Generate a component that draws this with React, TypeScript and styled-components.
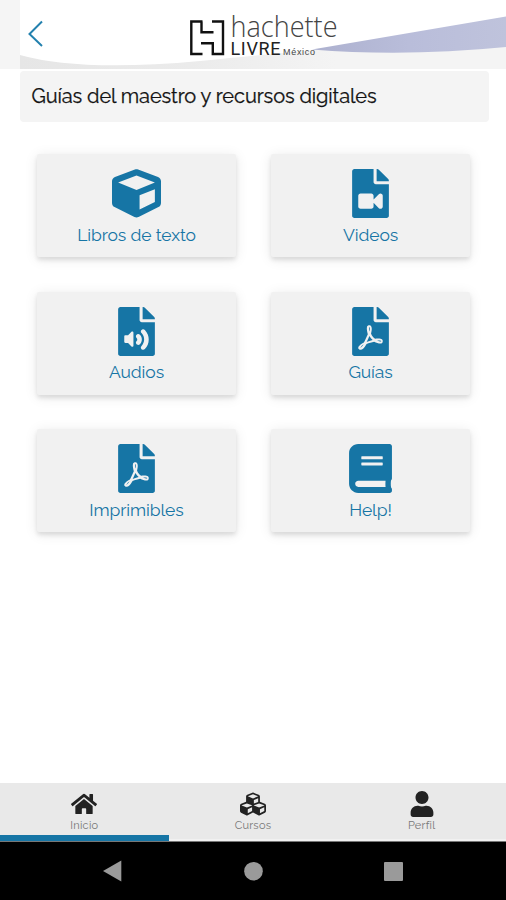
import React from "react";
import styled, { createGlobalStyle } from "styled-components";
import type { IconType } from "react-icons";
import {
  FaBook,
  FaCube,
  FaCubes,
  FaFileAudio,
  FaFilePdf,
  FaFileVideo,
  FaHome,
  FaUser,
} from "react-icons/fa";

const GlobalStyle = createGlobalStyle`
  * { box-sizing: border-box; }
  body { margin: 0; background: #fff; }
`;

const Screen = styled.div`
  display: flex;
  flex-direction: column;
  width: 506px;
  height: 900px;
  overflow: hidden;
  background: #fff;
  font-family: Raleway, Lato, sans-serif;
`;

const Header = styled.header`
  height: 69px;
  flex: none;
  padding-left: 20px;
  background: #f5f5f5;
`;

const Banner = styled.svg`
  display: block;
`;

const TitleBar = styled.h1`
  flex: none;
  width: 469px;
  height: 51px;
  margin: 2px 0 0 19.5px;
  padding: 0 12px;
  border-radius: 4px;
  background: #f4f4f4;
  color: #111;
  font-size: 20px;
  font-weight: 400;
  line-height: 51px;
  letter-spacing: -0.1px;
  -webkit-text-stroke: 0.25px #111;
  white-space: nowrap;
`;

const Grid = styled.main`
  flex: 1;
  display: grid;
  grid-template-columns: 199px 199px;
  grid-auto-rows: 103px;
  gap: 34.5px 35px;
  align-content: start;
  padding: 32px 36px 0 37px;
`;

const Card = styled.button`
  display: flex;
  flex-direction: column;
  align-items: center;
  padding: 15px 0 0;
  border: 0;
  border-radius: 2px;
  background: #f1f1f1;
  box-shadow: 0 3px 4px rgba(0, 0, 0, 0.1), 0 2px 14px rgba(0, 0, 0, 0.09);
  color: #1675a5;
  font-family: inherit;
`;

const CardLabel = styled.span`
  margin-top: 4.5px;
  font-size: 17.5px;
  line-height: 24px;
  letter-spacing: -0.1px;
`;

const Tabs = styled.nav`
  display: grid;
  grid-template-columns: repeat(3, 1fr);
  flex: none;
  height: 59px;
  background: #e9e9e9;
  border-bottom: 1px solid #777;
`;

const Tab = styled.a<{ $active?: boolean }>`
  display: flex;
  flex-direction: column;
  align-items: center;
  padding-top: 8px;
  color: #222;
  border-bottom: ${(p) => (p.$active ? "6px solid #1675a5" : "2px solid #f1f1f1")};
`;

const TabLabel = styled.span`
  margin-top: 1px;
  color: #777;
  font-size: 11px;
  line-height: 15px;
  letter-spacing: 0.25px;
`;

const SystemBar = styled.footer`
  flex: none;
  height: 58px;
  background: #000;
`;

interface Item {
  label: string;
  icon: IconType;
}

const cards: Item[] = [
  { label: "Libros de texto", icon: FaCube },
  { label: "Videos", icon: FaFileVideo },
  { label: "Audios", icon: FaFileAudio },
  { label: "Guías", icon: FaFilePdf },
  { label: "Imprimibles", icon: FaFilePdf },
  { label: "Help!", icon: FaBook },
];

const tabs: Item[] = [
  { label: "Inicio", icon: FaHome },
  { label: "Cursos", icon: FaCubes },
  { label: "Perfil", icon: FaUser },
];

function HeaderBanner() {
  return (
    <Banner width="486" height="69" viewBox="20 0 486 69">
      <defs>
        <linearGradient id="under" x1="0" x2="1">
          <stop offset="0" stopColor="#e6e6e6" />
          <stop offset="0.35" stopColor="#ebebeb" />
          <stop offset="0.65" stopColor="#f4f4f4" />
        </linearGradient>
        <linearGradient id="wing" x1="0" x2="1">
          <stop offset="0" stopColor="#adb1cf" />
          <stop offset="0.5" stopColor="#b9bdda" />
          <stop offset="1" stopColor="#bfc3dc" />
        </linearGradient>
      </defs>
      <rect x="20" width="486" height="69" fill="url(#under)" />
      <path d="M20 0H506V17L315 50Q250 56 200 61Q80 72 20 55Z" fill="#fff" />
      <path d="M312 49.5L506 16.5V47Q405 57 312 49.5Z" fill="url(#wing)" />
      <path d="M42 21.5L29.5 34L42 46" fill="none" stroke="#2381ae" strokeWidth="2" />
      <g fill="none" stroke="#111" strokeWidth="2.4">
        <path d="M202.5 21.5H191.3V54H202.5M201.5 21.5V32.3H213.5" />
        <path d="M212 21.5H223V54H212.8V43.3H201" />
      </g>
      <text x="230.5" y="36.5" fontFamily="Open Sans" fontSize="28.5" fontWeight="300" fill="#444" textLength="107" lengthAdjust="spacingAndGlyphs">
        hachette
      </text>
      <text x="230.5" y="54.5" fontFamily="Roboto" fontSize="18" fill="#222" textLength="50">
        LIVRE
      </text>
      <text x="283" y="54.5" fontFamily="Liberation Sans" fontSize="9" fill="#444" textLength="32">
        México
      </text>
    </Banner>
  );
}

export default function App() {
  return (
    <Screen>
      <GlobalStyle />
      <Header>
        <HeaderBanner />
      </Header>
      <TitleBar>Guías del maestro y recursos digitales</TitleBar>
      <Grid>
        {cards.map(({ label, icon: Icon }) => (
          <Card key={label}>
            <Icon size={49} />
            <CardLabel>{label}</CardLabel>
          </Card>
        ))}
      </Grid>
      <Tabs>
        {tabs.map(({ label, icon: Icon }, i) => (
          <Tab key={label} $active={i === 0}>
            <Icon size={26} />
            <TabLabel>{label}</TabLabel>
          </Tab>
        ))}
      </Tabs>
      <SystemBar>
        <svg width="506" height="58" viewBox="0 842 506 58" fill="#9a9a9a">
          <path d="M103 871L121.3 860.5V881.5Z" />
          <circle cx="253.5" cy="871.2" r="9.3" />
          <rect x="384" y="862" width="19" height="19" rx="1" />
        </svg>
      </SystemBar>
    </Screen>
  );
}
